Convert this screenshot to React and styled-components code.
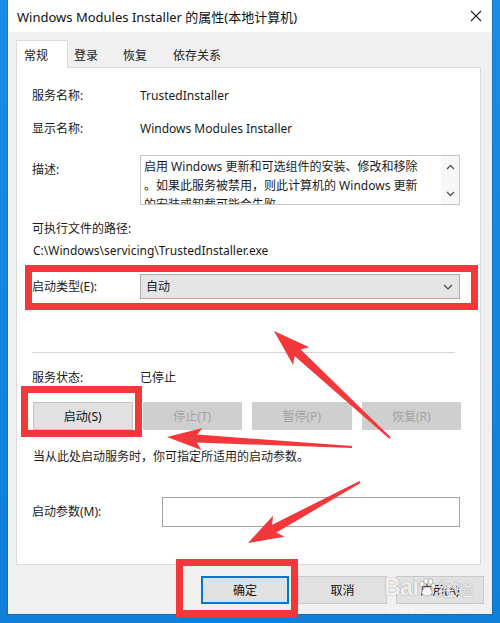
import React from 'react';
import styled, { createGlobalStyle } from 'styled-components';

const GlobalStyle = createGlobalStyle`
  html, body { margin: 0; padding: 0; }
  body {
    width: 500px;
    height: 623px;
    overflow: hidden;
    background: #1787e0;
    font-family: "Noto Sans", "Noto Sans CJK SC", sans-serif;
    color: #1a1a1a;
  }
`;

const Stage = styled.div`
  position: relative;
  width: 500px;
  height: 623px;
  background: linear-gradient(180deg, #1a8ce5 0%, #0f7fd9 100%);
  overflow: hidden;
`;

const Window = styled.div`
  margin-left: 8px;
  width: 484px;
  height: 614px;
  background: #f0f0f0;
  display: flex;
  flex-direction: column;
  box-shadow: 0 0 0 1px rgba(0, 0, 0, 0.12);
`;

const TitleBar = styled.div`
  height: 32px;
  flex: none;
  background: #ffffff;
  display: flex;
  align-items: center;
  justify-content: space-between;
  padding: 0 10px 0 9px;
  font-size: 13px;
  color: #111;
`;

const TabStrip = styled.div`
  height: 35px;
  flex: none;
  display: flex;
  align-items: flex-end;
  padding-left: 8px;
`;

const Tab = styled.div`
  box-sizing: border-box;
  width: ${(p) => p.$w}px;
  height: ${(p) => (p.$active ? 28 : 26)}px;
  padding-left: ${(p) => p.$pl}px;
  display: flex;
  align-items: center;
  font-size: 12px;
  color: #1a1a1a;
  background: ${(p) => (p.$active ? '#ffffff' : 'transparent')};
  border: 1px solid ${(p) => (p.$active ? '#dcdcdc' : 'transparent')};
  border-bottom: none;
  margin-bottom: ${(p) => (p.$active ? -1 : 0)}px;
  position: relative;
  z-index: 1;
`;

const Panel = styled.div`
  box-sizing: border-box;
  margin: 0 11px 0 8px;
  height: 498px;
  flex: none;
  background: #ffffff;
  border: 1px solid #dcdcdc;
  padding: 18px 20px 0 15px;
  display: flex;
  flex-direction: column;
`;

const Row = styled.div`
  display: flex;
  align-items: ${(p) => (p.$top ? 'flex-start' : 'center')};
  margin-top: ${(p) => p.$mt || 0}px;
  min-height: 20px;
  font-size: 12px;
  line-height: 20px;
`;

const Label = styled.div`
  flex: none;
  width: ${(p) => p.$w || 108}px;
  padding-top: ${(p) => p.$pt || 0}px;
  white-space: nowrap;
`;

const Value = styled.div`
  white-space: nowrap;
`;

const TextLine = styled.div`
  margin-top: ${(p) => p.$mt || 0}px;
  font-size: 12px;
  line-height: 20px;
  white-space: nowrap;
  padding-left: ${(p) => p.$pl || 0}px;
`;

const DescBox = styled.div`
  box-sizing: border-box;
  width: 320px;
  height: 50px;
  border: 1px solid #c6c6c6;
  display: flex;
  overflow: hidden;
`;

const DescText = styled.div`
  flex: 1;
  padding: 1px 0 0 3px;
  font-size: 12px;
  line-height: 19px;
  overflow: hidden;
`;

const DescLine = styled.div`
  white-space: nowrap;
`;

const ScrollCol = styled.div`
  flex: none;
  width: 18px;
  background: #f7f7f7;
  display: flex;
  flex-direction: column;
  align-items: center;
  justify-content: space-between;
  padding: 8px 0 7px;
  box-sizing: border-box;
`;

const Select = styled.div`
  box-sizing: border-box;
  width: 321px;
  height: 25px;
  background: #e5e5e5;
  border: 1px solid #adadad;
  display: flex;
  align-items: center;
  justify-content: space-between;
  padding: 0 6px 0 5px;
  font-size: 12px;
`;

const Separator = styled.div`
  margin-top: ${(p) => p.$mt}px;
  width: 423px;
  height: 1px;
  background: #d6d6d6;
`;

const ButtonGrid = styled.div`
  margin: ${(p) => p.$mt}px 0 0 1px;
  width: 428px;
  display: grid;
  grid-template-columns: repeat(4, 1fr);
  column-gap: 10px;
`;

const ServiceButton = styled.div`
  box-sizing: border-box;
  height: 28px;
  display: flex;
  align-items: center;
  justify-content: center;
  font-size: 12px;
  color: ${(p) => (p.$disabled ? '#a3a3a3' : '#111')};
  background: ${(p) => (p.$disabled ? '#cfcfcf' : '#e1e1e1')};
  border: 1px solid ${(p) => (p.$disabled ? '#cfcfcf' : '#c2c2c2')};
`;

const ParamInput = styled.div`
  box-sizing: border-box;
  width: 299px;
  height: 30px;
  background: #fff;
  border: 1px solid #a3a3a3;
`;

const Footer = styled.div`
  display: flex;
  justify-content: flex-end;
  gap: 9px;
  padding: 11px 8px 0 0;
`;

const DialogButton = styled.div`
  box-sizing: border-box;
  width: ${(p) => p.$w}px;
  height: 28px;
  display: flex;
  align-items: center;
  justify-content: center;
  font-size: 12px;
  color: #111;
  background: #e1e1e1;
  border: ${(p) => (p.$default ? '2px solid #0078d7' : '1px solid #c9c9c9')};
`;

const Overlay = styled.svg`
  position: absolute;
  left: 0;
  top: 0;
  width: 500px;
  height: 623px;
  pointer-events: none;
`;

const Watermark = styled.div`
  position: absolute;
  left: 384px;
  top: 574px;
  display: flex;
  align-items: center;
  pointer-events: none;
  color: rgba(255, 255, 255, 0.9);
  text-shadow: 0 0 1px rgba(90, 90, 90, 0.8);
`;

const WmLatin = styled.span`
  font-family: "Liberation Sans", Arial, sans-serif;
  font-size: 23px;
  font-weight: bold;
  letter-spacing: -0.5px;
`;

const WmCjk = styled.span`
  font-family: "Noto Sans CJK SC", sans-serif;
  font-size: 18px;
  margin-left: 1px;
`;

const WmSub = styled.div`
  position: absolute;
  left: 388px;
  top: 604px;
  font-family: "Liberation Sans", Arial, sans-serif;
  font-size: 8px;
  letter-spacing: 1px;
  color: rgba(255, 255, 255, 0.7);
  pointer-events: none;
`;

function arrowPoints(tail, tip, headLen, headHalf, shaft0, shaft1) {
  const dx = tip[0] - tail[0];
  const dy = tip[1] - tail[1];
  const L = Math.hypot(dx, dy);
  const ux = dx / L;
  const uy = dy / L;
  const nx = -uy;
  const ny = ux;
  const bx = tip[0] - ux * headLen;
  const by = tip[1] - uy * headLen;
  const pts = [
    [tail[0] + nx * shaft0, tail[1] + ny * shaft0],
    [bx + nx * shaft1, by + ny * shaft1],
    [bx - ux * 5 + nx * headHalf, by - uy * 5 + ny * headHalf],
    tip,
    [bx - ux * 5 - nx * headHalf, by - uy * 5 - ny * headHalf],
    [bx - nx * shaft1, by - ny * shaft1],
    [tail[0] - nx * shaft0, tail[1] - ny * shaft0],
  ];
  return pts.map((p) => `${p[0].toFixed(1)},${p[1].toFixed(1)}`).join(' ');
}

const RED = '#f2383b';

const Chevron = ({ up }) => (
  <svg width="9" height="6" viewBox="0 0 9 6">
    <path
      d={up ? 'M1 5 L4.5 1.5 L8 5' : 'M1 1 L4.5 4.5 L8 1'}
      fill="none"
      stroke="#555"
      strokeWidth="1.3"
    />
  </svg>
);

const Paw = () => (
  <svg width="18" height="20" viewBox="0 0 18 20">
    <g fill="rgba(255,255,255,0.9)" stroke="rgba(110,110,110,0.7)" strokeWidth="0.6">
      <ellipse cx="4" cy="6" rx="2.2" ry="2.8" />
      <ellipse cx="8" cy="3" rx="2.2" ry="2.8" />
      <ellipse cx="12.5" cy="3.5" rx="2.2" ry="2.8" />
      <ellipse cx="15.5" cy="8" rx="2" ry="2.6" />
      <path d="M9 9 C5 9 3 14 4.5 16.5 C6 18.5 12 18.5 13.5 16.5 C15 14 13 9 9 9 Z" />
    </g>
  </svg>
);

export default function App() {
  return (
    <Stage>
      <GlobalStyle />
      <Window>
        <TitleBar>
          <span>Windows Modules Installer 的属性(本地计算机)</span>
          <svg width="12" height="12" viewBox="0 0 12 12">
            <path d="M1 1 L11 11 M11 1 L1 11" stroke="#222" strokeWidth="1.1" />
          </svg>
        </TitleBar>
        <TabStrip>
          <Tab $active $w={52} $pl={7}>常规</Tab>
          <Tab $w={49} $pl={5}>登录</Tab>
          <Tab $w={50} $pl={5}>恢复</Tab>
          <Tab $w={70} $pl={5}>依存关系</Tab>
        </TabStrip>
        <Panel>
          <Row>
            <Label>服务名称:</Label>
            <Value>TrustedInstaller</Value>
          </Row>
          <Row $mt={13}>
            <Label>显示名称:</Label>
            <Value>Windows Modules Installer</Value>
          </Row>
          <Row $mt={16} $top>
            <Label $pt={5}>描述:</Label>
            <DescBox>
              <DescText>
                <DescLine>启用 Windows 更新和可选组件的安装、修改和移除</DescLine>
                <DescLine>。如果此服务被禁用，则此计算机的 Windows 更新</DescLine>
                <DescLine>的安装或卸载可能会失败</DescLine>
              </DescText>
              <ScrollCol>
                <Chevron up />
                <Chevron />
              </ScrollCol>
            </DescBox>
          </Row>
          <TextLine $mt={14}>可执行文件的路径:</TextLine>
          <TextLine $mt={2} $pl={1}>C:\Windows\servicing\TrustedInstaller.exe</TextLine>
          <Row $mt={13}>
            <Label>启动类型(E):</Label>
            <Select>
              <span>自动</span>
              <svg width="10" height="6" viewBox="0 0 10 6">
                <path d="M1 1 L5 5 L9 1" fill="none" stroke="#444" strokeWidth="1.1" />
              </svg>
            </Select>
          </Row>
          <Separator $mt={53} />
          <Row $mt={15}>
            <Label>服务状态:</Label>
            <Value>已停止</Value>
          </Row>
          <ButtonGrid $mt={14}>
            <ServiceButton>启动(S)</ServiceButton>
            <ServiceButton $disabled>停止(T)</ServiceButton>
            <ServiceButton $disabled>暂停(P)</ServiceButton>
            <ServiceButton $disabled>恢复(R)</ServiceButton>
          </ButtonGrid>
          <TextLine $mt={17} $pl={1}>当从此处启动服务时，你可指定所适用的启动参数。</TextLine>
          <Row $mt={30}>
            <Label $w={130}>启动参数(M):</Label>
            <ParamInput />
          </Row>
        </Panel>
        <Footer>
          <DialogButton $w={88} $default>确定</DialogButton>
          <DialogButton $w={89}>取消</DialogButton>
          <DialogButton $w={88}>应用(A)</DialogButton>
        </Footer>
      </Window>

      <Watermark>
        <WmLatin>Bai</WmLatin>
        <Paw />
        <WmCjk>经验</WmCjk>
      </Watermark>
      <WmSub>jingyan.baidu.com</WmSub>

      <Overlay viewBox="0 0 500 623">
        <rect x="28.5" y="268.5" width="446" height="38" fill="none" stroke={RED} strokeWidth="7" />
        <rect x="24.5" y="389.5" width="114" height="44" fill="none" stroke={RED} strokeWidth="7" />
        <rect x="179.5" y="562.5" width="115" height="51" fill="none" stroke={RED} strokeWidth="7" />
        <polygon points={arrowPoints([390, 438], [274, 331], 32, 12, 1, 4.5)} fill={RED} />
        <polygon points={arrowPoints([352, 447], [167, 437], 30, 11, 1, 4)} fill={RED} />
        <polygon points={arrowPoints([360, 482], [248, 543], 30, 12, 1, 4.5)} fill={RED} />
      </Overlay>
    </Stage>
  );
}
